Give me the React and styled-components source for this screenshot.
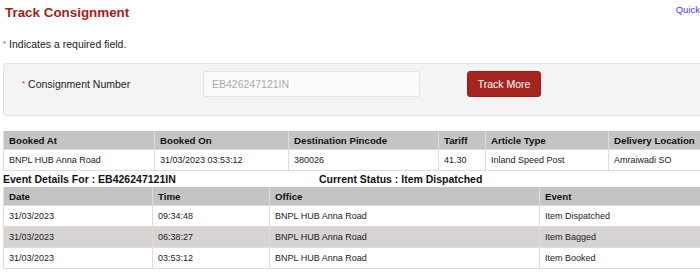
import React from 'react'
import styled, { createGlobalStyle } from 'styled-components'

const GlobalStyle = createGlobalStyle`
  html, body {
    margin: 0;
    padding: 0;
    overflow: hidden;
    background: #fff;
  }
  body {
    font-family: "Liberation Sans", Arial, sans-serif;
    color: #222;
  }
`

const Page = styled.div`
  width: 740px;
  padding-left: 3px;
`

const TopBar = styled.div`
  display: flex;
  align-items: flex-start;
  height: 26px;
  width: 697px;
`

const Title = styled.h1`
  margin: 0;
  padding-left: 2px;
  font-size: 13.4px;
  line-height: 26px;
  font-weight: bold;
  color: #a81c1c;
`

const QuickLink = styled.a`
  margin-left: auto;
  margin-top: 4px;
  font-size: 9.5px;
  line-height: 12px;
  color: #5a34f0;
  text-decoration: none;
  white-space: nowrap;
`

const Star = styled.span`
  color: #c8322c;
  font-size: ${p => p.small ? '8px' : 'inherit'};
  vertical-align: ${p => p.small ? '2px' : 'baseline'};
`

const Required = styled.p`
  margin: 10px 0 0;
  font-size: 10.5px;
  line-height: 16px;
  color: #222;
`

const Panel = styled.div`
  margin-top: 11px;
  display: flex;
  align-items: center;
  background: #f4f4f4;
  border: 1px solid #e2e2e2;
  border-radius: 3px;
  padding: 7px 0 18px 18px;
`

const Label = styled.label`
  width: 181px;
  font-size: 10.5px;
  color: #222;
`

const Input = styled.input`
  box-sizing: border-box;
  width: 217px;
  height: 26px;
  padding: 0 8px;
  border: 1px solid #e4e4e4;
  border-radius: 3px;
  background: #fbfbfb;
  font-family: "Liberation Sans", Arial, sans-serif;
  font-size: 10.5px;
  outline: none;
  &::placeholder {
    color: #aaa;
  }
`

const Button = styled.button`
  box-sizing: border-box;
  margin-left: 47px;
  width: 74px;
  height: 26px;
  border: 1px solid #9a1d1a;
  border-radius: 3px;
  background: #a62420;
  color: #fff;
  font-family: "Liberation Sans", Arial, sans-serif;
  font-size: 10.5px;
  cursor: pointer;
`

const Table = styled.table`
  width: 737px;
  margin-top: ${p => p.top || 0}px;
  border-collapse: collapse;
  table-layout: fixed;
`

const Th = styled.th`
  height: 18px;
  padding: 0 0 0 5px;
  background: #c4c4c4;
  border: 1px solid #dcdcdc;
  border-top: none;
  text-align: left;
  font-size: 9.7px;
  font-weight: bold;
  color: #111;
`

const Row = styled.tr`
  background: ${p => p.alt ? '#d7d4d3' : '#fff'};
`

const Td = styled.td`
  height: 20px;
  padding: 0 0 0 5px;
  border: 1px solid #dcdcdc;
  font-size: 9px;
  color: #222;
  white-space: nowrap;
  overflow: hidden;
`

const EventLine = styled.div`
  display: flex;
  height: 16px;
  align-items: center;
  font-size: 10.5px;
  font-weight: bold;
  color: #111;
`

const EventFor = styled.span`
  width: 316px;
`

const booking = ['BNPL HUB Anna Road', '31/03/2023 03:53:12', '380026', '41.30', 'Inland Speed Post', 'Amraiwadi SO']
const bookingCols = [
  ['Booked At', 151],
  ['Booked On', 134],
  ['Destination Pincode', 150],
  ['Tariff', 47],
  ['Article Type', 123],
  ['Delivery Location', 132],
]

const eventCols = [
  ['Date', 149],
  ['Time', 117],
  ['Office', 270],
  ['Event', 201],
]

const events = [
  ['31/03/2023', '09:34:48', 'BNPL HUB Anna Road', 'Item Dispatched'],
  ['31/03/2023', '06:38:27', 'BNPL HUB Anna Road', 'Item Bagged'],
  ['31/03/2023', '03:53:12', 'BNPL HUB Anna Road', 'Item Booked'],
]

export default function App() {
  return (
    <Page>
      <GlobalStyle />
      <TopBar>
        <Title>Track Consignment</Title>
        <QuickLink href="#">Quick</QuickLink>
      </TopBar>

      <Required><Star small>*</Star> Indicates a required field.</Required>

      <Panel>
        <Label><Star small>*</Star> Consignment Number</Label>
        <Input placeholder="EB426247121IN" />
        <Button>Track More</Button>
      </Panel>

      <Table top={15}>
        <colgroup>
          {bookingCols.map(([name, w]) => <col key={name} style={{ width: w }} />)}
        </colgroup>
        <thead>
          <tr>
            {bookingCols.map(([name]) => <Th key={name}>{name}</Th>)}
          </tr>
        </thead>
        <tbody>
          <Row>
            {booking.map((v, i) => <Td key={i}>{v}</Td>)}
          </Row>
        </tbody>
      </Table>

      <EventLine>
        <EventFor>Event Details For : EB426247121IN</EventFor>
        <span>Current Status : Item Dispatched</span>
      </EventLine>

      <Table>
        <colgroup>
          {eventCols.map(([name, w]) => <col key={name} style={{ width: w }} />)}
        </colgroup>
        <thead>
          <tr>
            {eventCols.map(([name]) => <Th key={name}>{name}</Th>)}
          </tr>
        </thead>
        <tbody>
          {events.map((e, i) => (
            <Row key={i} alt={i === 1}>
              {e.map((v, j) => <Td key={j}>{v}</Td>)}
            </Row>
          ))}
        </tbody>
      </Table>
    </Page>
  )
}
